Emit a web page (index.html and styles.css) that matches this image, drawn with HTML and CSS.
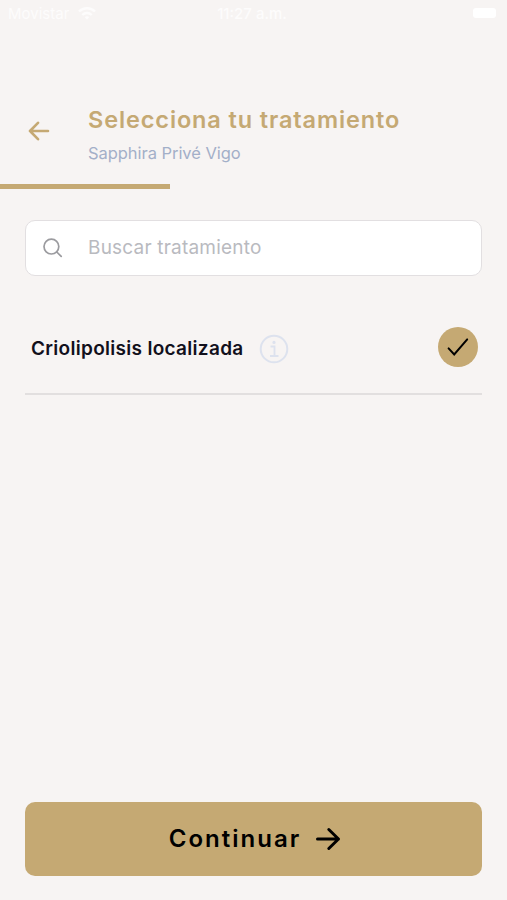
FILE: index.html
```
<!DOCTYPE html>
<html lang="es">
<head>
	<meta charset="UTF-8">
	<meta name="viewport" content="width=device-width, initial-scale=1">
	<title>Selecciona tu tratamiento</title>
	<link rel="stylesheet" href="styles.css">
</head>
<body>
	<div class="status">
		<div class="carrier">
			<span>Movistar</span>
			<svg width="18" height="13" viewBox="0 0 18 13" fill="none" stroke="currentColor" stroke-width="2.4">
				<path d="M1 4.5a11.5 11.5 0 0 1 16 0M4.3 8a6.6 6.6 0 0 1 9.4 0"/>
				<path d="M9 12.5 6.8 10.3a3.2 3.2 0 0 1 4.4 0z" fill="currentColor" stroke="none"/>
			</svg>
		</div>
		<span class="time">11:27 a.m.</span>
		<div class="battery"></div>
	</div>
	<header class="header">
		<a class="back" href="#" aria-label="Volver">
			<svg width="22" height="20" viewBox="0 0 22 20" fill="none" stroke="currentColor" stroke-width="2.6" stroke-linecap="round" stroke-linejoin="round">
				<path d="M20 10H2M10 1.8 2 10l8 8.2"/>
			</svg>
		</a>
		<div class="heading">
			<h1>Selecciona tu tratamiento</h1>
			<p>Sapphira Privé Vigo</p>
		</div>
	</header>
	<div class="progress"></div>
	<main class="content">
		<label class="search">
			<svg width="20" height="20" viewBox="0 0 20 20" fill="none" stroke="currentColor" stroke-width="1.7" stroke-linecap="round">
				<circle cx="8.4" cy="8.6" r="7.4"/>
				<path d="m13.8 14 4.4 4.4"/>
			</svg>
			<input type="text" placeholder="Buscar tratamiento">
		</label>
		<div class="item">
			<span class="name">Criolipolisis localizada</span>
			<svg class="info" width="30" height="30" viewBox="0 0 30 30" fill="none" stroke="currentColor" stroke-width="2">
				<circle cx="15" cy="15" r="13.3"/>
				<path d="M11.5 12.5h4v9M11 22h8.5" stroke-width="1.8"/>
				<circle cx="15" cy="8.4" r="1.6" fill="currentColor" stroke="none"/>
			</svg>
			<span class="check">
				<svg width="22" height="20" viewBox="0 0 22 20" fill="none" stroke="currentColor" stroke-width="2" stroke-linecap="round">
					<path d="m1.6 11.4 5.6 6L20.2 2.4"/>
				</svg>
			</span>
		</div>
	</main>
	<button type="button" class="continue">
		<span>Continuar</span>
		<svg width="26" height="24" viewBox="0 0 26 24" fill="none" stroke="currentColor" stroke-width="3" stroke-linecap="round" stroke-linejoin="round">
			<path d="M2.5 12h21M13.8 2.5l9.7 9.5-9.7 9.5"/>
		</svg>
	</button>
</body>
</html>
```

FILE: styles.css
```
* {box-sizing: border-box;}
body {
	display: flex;
	flex-direction: column;
	height: 100vh;
	margin: 0;
	background: #f7f4f3;
	color: #12101c;
	font-family: Inter, "Open Sans", sans-serif;
}
svg {display: block;flex: none;}

.status {
	display: grid;
	grid-template-columns: 1fr auto 1fr;
	align-items: center;
	height: 26px;
	padding: 0 11px 0 8px;
	color: #fdfcfc;
	font-size: 15px;
}
.carrier {display: flex;align-items: center;gap: 9px;}
.time {font-weight: 500;}
.battery {justify-self: end;width: 23px;height: 10px;border-radius: 3px;background: #fff;}

.header {display: flex;height: 158px;padding: 79px 0 0 28px;color: #c5a973;}
.back {width: 60px;padding-top: 16px;color: inherit;}
.heading h1 {
	margin: 0;
	font-size: 23.5px;
	font-weight: 600;
	letter-spacing: .88px;
	line-height: 30px;
	white-space: nowrap;
}
.heading p {margin: 5px 0 0;color: #a3afc8;font-size: 16.5px;letter-spacing: -.05px;line-height: 26px;}
.progress {width: 170px;height: 5px;background: #c5a973;}

.content {flex: 1;padding: 31px 25px 0;}
.search {
	display: flex;
	align-items: center;
	height: 56px;
	padding: 0 17px;
	border: 1px solid #e2dfe1;
	border-radius: 10px;
	background: #fff;
	color: #9b9b9f;
}
.search input {
	flex: 1;
	margin-left: 25px;
	padding: 0 0 2px;
	border: 0;
	outline: 0;
	background: none;
	font: 19px Inter, "Open Sans", sans-serif;
	letter-spacing: .2px;
}
.search input::placeholder {color: #b9babf;opacity: 1;}

.item {
	display: flex;
	align-items: center;
	height: 119px;
	padding: 28px 4px 0 6px;
	border-bottom: 2px solid #e2dfdf;
}
.name {font-size: 19px;font-weight: 600;letter-spacing: .3px;white-space: nowrap;}
.info {margin-left: 15px;color: #dde2ee;}
.check {
	display: flex;
	align-items: center;
	justify-content: center;
	width: 40px;
	height: 40px;
	margin: 0 0 4px auto;
	border-radius: 50%;
	background: #c5a973;
	color: #000;
}

.continue {
	display: flex;
	align-items: center;
	justify-content: center;
	gap: 14px;
	height: 74px;
	margin: 0 25px 24px;
	padding: 0 0 0 3px;
	border: 0;
	border-radius: 10px;
	background: #c5a973;
	color: #000;
	font: 600 24px Inter, "Open Sans", sans-serif;
	letter-spacing: 2px;
}
.continue span {padding-bottom: 2px;}
```
